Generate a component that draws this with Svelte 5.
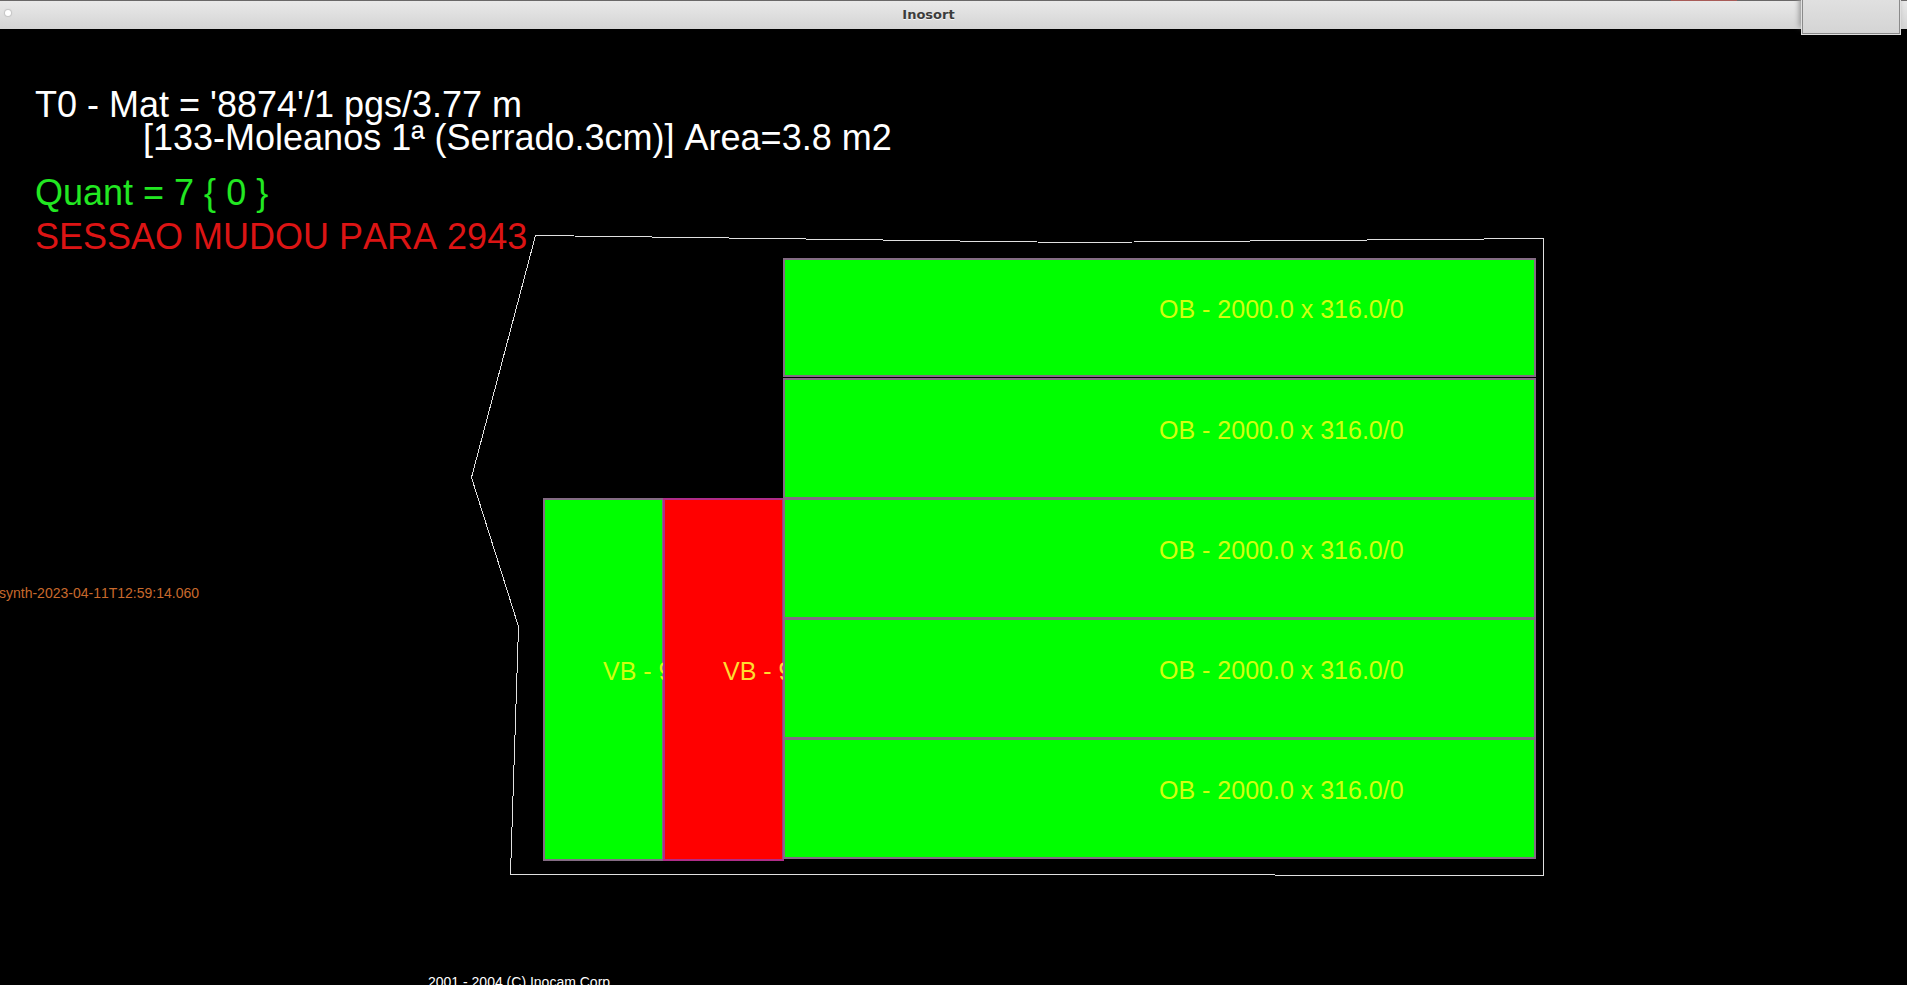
<script lang="ts">
    type Piece = {
        label: string;
        x: number;
        y: number;
        width: number;
        height: number;
        rejected?: boolean;
    };

    const material = "T0 - Mat = '8874'/1 pgs/3.77 m";
    const detail = "[133-Moleanos 1ª (Serrado.3cm)] Area=3.8 m2";
    const quantity = "Quant = 7 { 0 }";
    const notice = "SESSAO MUDOU PARA 2943";
    const stamp = "synth-2023-04-11T12:59:14.060";

    /** Contour of the slab, in stage units. */
    const contour =
        "535.5,206.5 1075.5,213.5 1543.5,209.5 1543.5,846.5 1275.5,846.5 1274.5,845.5 510.5,845.5 518.5,597.5 471.5,448.5";

    const pieces: Piece[] = [
        { label: "VB - 9", x: 543, y: 469, width: 120, height: 362 },
        { label: "VB - 9", x: 663, y: 469, width: 120, height: 362, rejected: true },
        { label: "OB - 2000.0 x 316.0/0", x: 783, y: 229, width: 752, height: 118 },
        { label: "OB - 2000.0 x 316.0/0", x: 783, y: 349, width: 752, height: 120 },
        { label: "OB - 2000.0 x 316.0/0", x: 783, y: 469, width: 752, height: 120 },
        { label: "OB - 2000.0 x 316.0/0", x: 783, y: 589, width: 752, height: 120 },
        { label: "OB - 2000.0 x 316.0/0", x: 783, y: 709, width: 752, height: 120 },
    ];
</script>

<div class="window">
    <header class="titlebar">
        <span class="dot"></span>
        <h1>Inosort</h1>
        <span class="tab"></span>
    </header>

    <main class="stage">
        <svg class="slab" viewBox="0 0 1907 956" preserveAspectRatio="xMinYMin meet">
            <polygon class="contour" points={contour} />
            {#each pieces as p, i (i)}
                <clipPath id="piece-{i}">
                    <rect x={p.x} y={p.y} width={p.width} height={p.height} />
                </clipPath>
                <rect
                    class="piece"
                    class:rejected={p.rejected}
                    x={p.x + 1}
                    y={p.y + 1}
                    width={p.width - 1}
                    height={p.height - 1}
                />
                <text
                    class="piece-label"
                    x={p.x + p.width / 2}
                    y={p.y + p.height / 2 + 1}
                    clip-path="url(#piece-{i})">{p.label}</text
                >
            {/each}
        </svg>

        <section class="status">
            <p>{material}</p>
            <p class="detail">{detail}</p>
            <p class="quantity">{quantity}</p>
            <p class="notice">{notice}</p>
        </section>
        <p class="stamp">{stamp}</p>
        <footer>2001 - 2004 (C) Inocam Corp.</footer>
    </main>
</div>

<style>
    :global(body) {
        margin: 0;
        background: #000;
        overflow: hidden;
    }

    .window {
        display: flex;
        flex-direction: column;
        height: 100vh;
        font-family: "Liberation Sans", Arial, sans-serif;
        font-kerning: none;
        color: #fff;
    }

    p,
    h1 {
        margin: 0;
        font-weight: normal;
    }

    .titlebar {
        position: relative;
        z-index: 1;
        display: flex;
        align-items: center;
        justify-content: center;
        flex-shrink: 0;
        box-sizing: border-box;
        height: 29px;
        padding-right: 50px;
        border-top: 1px solid #6a6868;
        background: linear-gradient(#e9e9e9, #d4d4d4);
    }

    .titlebar h1 {
        font: bold 13px/16px "DejaVu Sans", sans-serif;
        color: #3c3c3c;
        text-shadow: 0 1px #f4f4f4;
    }

    .dot {
        position: absolute;
        left: 5px;
        top: 9px;
        width: 6px;
        height: 6px;
        border-radius: 50%;
        background: #fff;
        box-shadow: 0 0 1px 1px #c4c4c4;
    }

    /* reddish strip showing along the top edge */
    .titlebar::before {
        content: "";
        position: absolute;
        right: 170px;
        top: -1px;
        width: 66px;
        height: 1px;
        background: #a85c58;
    }

    .tab {
        position: absolute;
        right: 6px;
        top: -1px;
        box-sizing: border-box;
        width: 100px;
        height: 35px;
        border: 1px solid #e0e0e0;
        border-top: none;
        background: linear-gradient(#e0e0e0, #d4d4d4);
        box-shadow:
            inset 0 -1px #8a8a8a,
            inset 1px 0 #8a8a8a,
            inset -1px 0 #8a8a8a,
            -2px -8px 5px #999;
    }

    .stage {
        position: relative;
        display: flex;
        flex-direction: column;
        flex: 1;
        min-height: 0;
        overflow: hidden;
        white-space: nowrap;
    }

    .slab {
        position: absolute;
        left: 0;
        top: 0;
        width: 100%;
    }

    .contour {
        fill: none;
        stroke: #e0e0e0;
        shape-rendering: crispEdges;
    }

    .piece {
        fill: #0f0;
        stroke: #846c84;
        stroke-width: 2px;
        shape-rendering: crispEdges;
    }

    .piece.rejected {
        fill: #f00;
        stroke: #b02c88;
    }

    .piece-label {
        font-size: 25px;
        fill: #d0ff10;
    }

    .rejected + .piece-label {
        fill: #ffdc30;
    }

    .status {
        position: relative;
        padding: 59px 0 0 35px;
        font-size: 36px;
        line-height: 33px;
    }

    .detail {
        padding-left: 108px;
    }

    .quantity {
        padding-top: 22px;
        color: #22e822;
    }

    .notice {
        padding-top: 11px;
        color: #dc1414;
    }

    .stamp {
        position: relative;
        align-self: flex-start;
        margin: 330px 0 0 -1px;
        font-size: 14px;
        line-height: 20px;
        color: #c8692c;
    }

    footer {
        position: relative;
        margin-top: auto;
        margin-bottom: -6px;
        padding-left: 428px;
        font-size: 14px;
        line-height: 18px;
    }
</style>
